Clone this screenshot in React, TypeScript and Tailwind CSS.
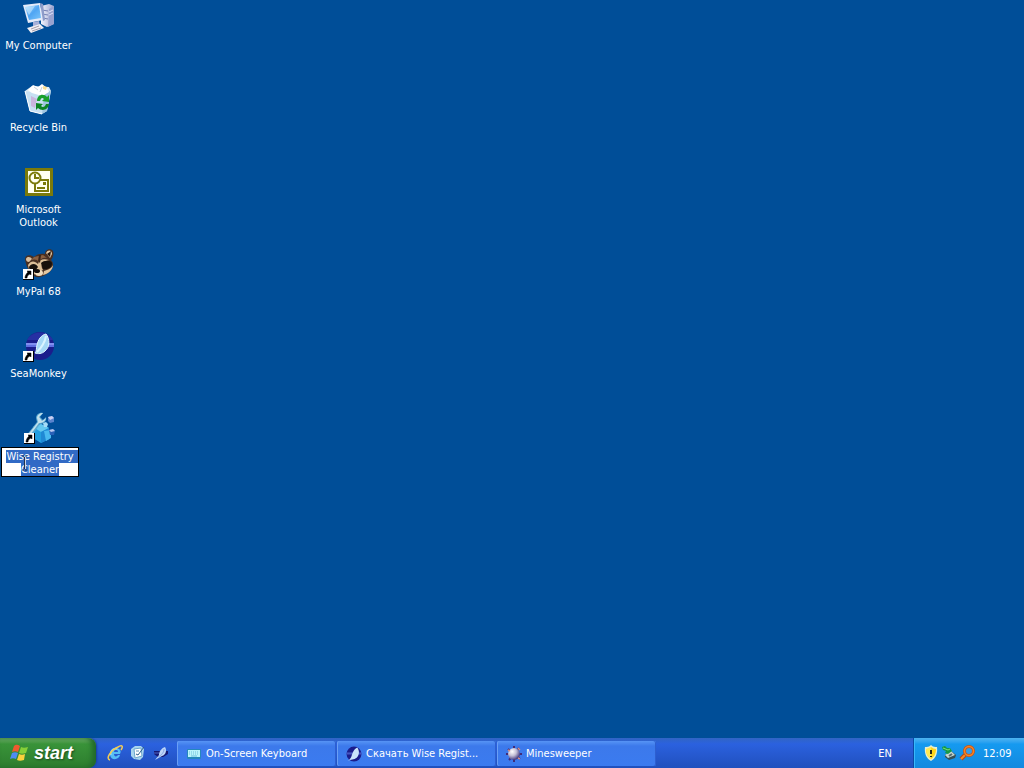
import { useEffect, useRef, useState } from "react";
import type { ReactNode } from "react";

function ComputerIcon() {
  return (
    <svg viewBox="0 0 32 32" className="size-8" aria-hidden="true">
      <defs>
        <linearGradient id="screen" x1="0" y1="0" x2="1" y2="1">
          <stop offset="0" stopColor="#a9dcff" />
          <stop offset="0.5" stopColor="#4fa5f3" />
          <stop offset="1" stopColor="#7cc6fb" />
        </linearGradient>
        <linearGradient id="tower" x1="0" y1="0" x2="1" y2="0">
          <stop offset="0" stopColor="#f3f4fc" />
          <stop offset="1" stopColor="#9aa3cf" />
        </linearGradient>
      </defs>
      <path d="M18 4 L26 2 L31 4 L31 22 L24 25 L18 22 Z" fill="url(#tower)" />
      <path d="M26 7 L31 4 L31 22 L25 25 Z" fill="#98a2cf" />
      <path d="M19 8 L25 9 M19 12 L25 13 M20 16 L25 17" stroke="#7480b4" strokeWidth="1" />
      <path d="M26 10 L30 8 M26 13 L30 11" stroke="#dfe4fa" strokeWidth="1" />
      <path d="M0 3 L17 1 L20 18 L5 21 Z" fill="#e4ebfa" />
      <path d="M17 1 L20 2 L22 18 L20 19 Z" fill="#8d9bc9" />
      <path d="M2 5 L16 3 L18 16 L6 18 Z" fill="url(#screen)" />
      <path d="M2 5 L12 4 L6 13 Z" fill="#c9eaff" opacity="0.6" />
      <path d="M10 20 L16 19 L17 24 L10 25 Z" fill="#a8b1d9" />
      <path d="M4 26 L17 22 L21 26 L8 31 Z" fill="#f2f0f4" />
      <path d="M8 27 L16 24 M9 29 L18 26" stroke="#a79eaa" strokeWidth="1" />
    </svg>
  );
}

function RecycleIcon() {
  return (
    <svg viewBox="0 0 32 32" className="size-8" aria-hidden="true">
      <path d="M2 7 L9 2 L26 3 L28 7 L24 27 L19 30 L7 27 Z" fill="#dcebf6" />
      <path d="M2 7 L21 11 L19 30 L7 27 Z" fill="#c7e0f3" />
      <path d="M21 11 L28 6 L24 27 L19 30 Z" fill="#9ec4df" />
      <path d="M5 6 L10 1 L15 3 L19 0 L24 4 L26 8 L19 12 L9 9 Z" fill="#fff" />
      <path d="M11 3 L15 6 M19 3 L17 8" stroke="#c9d1d8" strokeWidth="1" />
      <path d="M20 2 L24 3 L23 6 L20 5 Z" fill="#f8df94" />
      <path d="M8 12 L14 15 L12 24 L8 22 Z" fill="#c9b5de" />
      <path d="M2 7 L7 27 L19 30" fill="none" stroke="#fff" strokeWidth="1" />
      <path d="M14 17 C14 10 21 9 24 13 L26 11 L26 18 L19 17 L21 15 C19 13 18 14 17 17 Z" fill="#18a02c" />
      <path d="M26 20 C25 27 18 27 15 24 L13 26 L13 19 L20 20 L18 22 C20 24 22 23 23 20 Z" fill="#0c8423" />
    </svg>
  );
}

function OutlookIcon() {
  return (
    <svg viewBox="0 0 32 32" className="size-8" aria-hidden="true">
      <rect x="2" y="2" width="28" height="28" fill="#7b7a0a" />
      <rect x="5" y="5" width="22" height="22" fill="#fffff0" />
      <rect x="12" y="14" width="13" height="11" fill="#fffff0" stroke="#7b7a0a" strokeWidth="2" />
      <path d="M20 16 H23 V19 H20 Z" fill="#7b7a0a" />
      <path d="M14 22 H22" stroke="#7b7a0a" strokeWidth="2" />
      <circle cx="12" cy="12" r="5.500" fill="#fffff0" stroke="#7b7a0a" strokeWidth="2" />
      <path d="M12 8 V12 H16" fill="none" stroke="#7b7a0a" strokeWidth="2" />
    </svg>
  );
}

function ShortcutArrow() {
  return (
    <g>
      <rect x="0" y="21" width="11" height="11" fill="#000" />
      <rect x="0" y="21" width="10" height="10" fill="#fff" />
      <path d="M4 23 H8 V27 L7 26 C5 27 4 28 4 30 H2 C2 28 3 26 5 24 Z" fill="#000" stroke="#000" strokeWidth="0.500" />
    </g>
  );
}

function RaccoonIcon() {
  return (
    <svg viewBox="0 0 32 32" className="size-8" aria-hidden="true">
      <path d="M2 11 C2 7 7 6 11 9 C14 6 18 5 22 6 C22 1 28 0 30 3 C31 6 30 10 28 12 C32 16 30 22 25 25 C20 29 14 31 10 27 C5 23 3 17 2 11 Z" fill="#493023" />
      <path d="M3 11 C4 8 8 9 9 11 L6 14 C4 14 3 13 3 11 Z" fill="#d9bf9f" />
      <path d="M23 5 C25 1 29 2 29 6 L27 10 Z" fill="#e3caa8" />
      <path d="M24 6 L28 3 L27 9 Z" fill="#26170f" />
      <path d="M5 17 C8 12 12 13 15 16 C16 12 20 10 26 12 L20 14 C18 16 18 19 20 22 L10 27 C6 24 6 21 5 17 Z" fill="#dcbf98" />
      <path d="M11 9 L20 7 L24 10 C20 9 17 11 16 14 C14 11 11 11 8 12 Z" fill="#8b6040" />
      <path d="M16 7 L18 7 L17 15 L15 13 Z" fill="#3a2418" />
      <path d="M6 19 C8 15 13 15 15 19 L12 23 C9 24 6 22 6 19 Z" fill="#17100c" />
      <path d="M18 15 C21 12 28 12 29 15 C29 20 24 22 20 21 Z" fill="#17100c" />
      <path d="M21 23 C25 22 29 20 30 17 C30 22 25 26 20 27 Z" fill="#e3c8a1" />
      <ellipse cx="16" cy="25" rx="4" ry="3" fill="#f3dfc0" />
      <ellipse cx="14" cy="23" rx="3" ry="2" fill="#120d0b" />
      <ShortcutArrow />
    </svg>
  );
}

function SeaMonkeyArt() {
  return (
    <g>
      <circle cx="17" cy="16" r="14" fill="#1b1d8c" />
      <path d="M4 10 C9 0 25 0 30 10 Z" fill="#2630a3" />
      <path d="M3 13 H31 V17 H3 Z" fill="#5f6fe0" />
      <path d="M3 14 H31" stroke="#a3b0ff" strokeWidth="1" />
      <path d="M23 4 C27 9 27 17 22 21 C19 24 15 24 12 23 C14 21 13 18 14 15 C15 10 18 5 23 4 Z" fill="#a5d8f5" stroke="#e0f6ff" strokeWidth="1" />
      <path d="M23 6 C22 12 19 17 14 22" fill="none" stroke="#d9f4ff" strokeWidth="2" />
    </g>
  );
}

function SeaMonkeyIcon() {
  return (
    <svg viewBox="0 0 32 32" className="size-8" aria-hidden="true">
      <SeaMonkeyArt />
      <ShortcutArrow />
    </svg>
  );
}

function RegistryIcon() {
  return (
    <svg viewBox="0 0 32 32" className="size-8" aria-hidden="true">
      <path d="M9 15 L17 12 L25 16 L25 27 L17 31 L9 26 Z" fill="#239fe0" />
      <path d="M9 15 L17 12 L25 16 L17 20 Z" fill="#65c8f0" />
      <path d="M17 20 L25 16 L25 27 L17 31 Z" fill="#1f88d4" />
      <path d="M20 19 L27 18 L27 26 L22 29 Z" fill="#49b9f0" />
      <path d="M2 24 L13 10 L12 6 C12 3 15 0 19 1 L16 5 L19 8 L22 5 C23 9 20 12 16 12 L5 28 Z" fill="#5ba8d0" />
      <path d="M3 24 L14 10 L13 6 C13 3 16 1 19 1 L15 5 L18 9 L22 6 C21 10 18 11 15 11 L4 26 Z" fill="#c2e0ec" />
      <path d="M24 5 L28 4 L30 6 L30 10 L26 11 L24 9 Z" fill="#5a83cd" />
      <path d="M24 5 L28 4 L30 6 L26 8 Z" fill="#c9d0f1" />
      <path d="M19 11 L22 10 L24 12 L23 15 L20 15 Z" fill="#a5dcf7" />
      <path d="M25 18 L29 17 L31 19 L30 23 L26 23 Z" fill="#2960b7" />
      <path d="M25 18 L29 17 L31 19 L27 20 Z" fill="#b6c6ee" />
      <ShortcutArrow />
    </svg>
  );
}

function WindowsLogo() {
  return (
    <svg viewBox="0 0 20 18" className="h-[18px] w-5" aria-hidden="true">
      <path d="M4 2 C6 0 8 1 10 2 L8 8 C6 7 4 7 2 8 Z" fill="#ef5a2f" />
      <path d="M11 3 C13 4 15 4 18 3 L16 9 C13 10 11 10 9 9 Z" fill="#86cf38" />
      <path d="M2 9 C4 8 6 8 8 9 L6 15 C4 14 2 14 0 15 Z" fill="#4e8cf2" />
      <path d="M9 10 C11 11 13 11 15 10 L14 16 C11 17 9 17 7 16 Z" fill="#fad13c" />
    </svg>
  );
}

function ExplorerIcon() {
  return (
    <svg viewBox="0 0 16 16" className="size-4" aria-hidden="true">
      <path d="M13 10 C12 15 4 16 3 10 C2 4 8 1 12 4 C14 5 14 7 13 9 H7 C7 12 10 12 11 10 Z M7 7 H11 C11 4 7 4 7 7 Z" fill="#55bdf5" fillRule="evenodd" />
      <path d="M4 10 C3 6 6 3 10 4" fill="none" stroke="#b2e8ff" strokeWidth="1" />
      <path d="M3 15 C-2 14 4 5 11 2 C16 -1 16 2 14 5" fill="none" stroke="#f1cb58" strokeWidth="1.500" />
    </svg>
  );
}

function ShowDesktopIcon() {
  return (
    <svg viewBox="0 0 16 16" className="size-4" aria-hidden="true">
      <path d="M1 4 L5 1 L11 1 L14 4 L13 12 L10 15 L4 14 L1 11 Z" fill="#a9d5ee" />
      <path d="M4 4 L11 3 L12 11 L5 13 Z" fill="#fff" stroke="#6ba5cc" strokeWidth="1" />
      <path d="M6 9 L8 10 L14 2" fill="none" stroke="#2d5f8c" strokeWidth="1" />
      <path d="M6 6 H9" stroke="#5c95b8" strokeWidth="1" />
    </svg>
  );
}

function WingIcon() {
  return (
    <svg viewBox="0 0 16 16" className="size-4" aria-hidden="true">
      <path d="M1 6 H15 V9 L10 12 H5 L1 9 Z" fill="#151873" />
      <path d="M12 2 C14 5 13 10 9 11 L2 15 L6 10 C6 6 9 3 12 2 Z" fill="#bcd5f8" />
      <path d="M1 8 H6" stroke="#5166c6" strokeWidth="1" />
      <path d="M11 4 C11 7 9 10 5 12" fill="none" stroke="#86a3e0" strokeWidth="1" />
    </svg>
  );
}

function KeyboardIcon() {
  return (
    <svg viewBox="0 0 16 16" className="size-4" aria-hidden="true">
      <rect x="1" y="3" width="14" height="10" rx="1" fill="#2588bd" />
      <rect x="2" y="4" width="12" height="7" fill="#baf4fb" />
      <path d="M3 6 H13 M3 8 H13" stroke="#6cbfdb" strokeWidth="1" strokeDasharray="1 1" />
      <path d="M5 10 H11" stroke="#6cbfdb" strokeWidth="1" />
    </svg>
  );
}

function TaskSeaMonkeyIcon() {
  return (
    <svg viewBox="2 1 30 30" className="size-4" aria-hidden="true">
      <circle cx="17" cy="16" r="14" fill="#1b1d8c" />
      <path d="M3 13 H31 V17 H3 Z" fill="#4656c0" />
      <path d="M23 4 C28 10 27 19 22 23 C17 27 11 26 5 29 C12 25 12 20 14 15 C16 10 19 6 23 4 Z" fill="#c9e4fb" />
    </svg>
  );
}

function MineIcon() {
  return (
    <svg viewBox="0 0 16 16" className="size-4" aria-hidden="true">
      <defs>
        <radialGradient id="mine" cx="0.35" cy="0.3" r="0.7">
          <stop offset="0" stopColor="#fff" />
          <stop offset="0.5" stopColor="#c3bfd6" />
          <stop offset="1" stopColor="#453c82" />
        </radialGradient>
      </defs>
      <path d="M8 0 V16 M0 8 H16 M2 3 L14 13 M13 2 L3 14" stroke="#402b78" strokeWidth="2" />
      <circle cx="8" cy="8" r="6" fill="url(#mine)" />
      <path d="M12 2 L14 4 M2 4 L4 5 M12 12 L14 13" stroke="#d18e86" strokeWidth="1.500" />
    </svg>
  );
}

function ShieldIcon() {
  return (
    <svg viewBox="0 0 16 16" className="size-4" aria-hidden="true">
      <path d="M8 0 C10 2 12 2 14 2 C15 9 12 14 8 16 C4 14 1 9 2 2 C4 2 6 2 8 0 Z" fill="#e9eecb" />
      <path d="M8 2 C10 3 11 4 13 4 C13 9 11 12 8 14 C5 12 3 9 3 4 C5 4 6 3 8 2 Z" fill="#ffd51c" />
      <path d="M8 2 V14 C5 12 3 9 3 4 C5 4 6 3 8 2 Z" fill="#ffe952" />
      <path d="M8 5 V9 M8 11 V12" stroke="#282719" strokeWidth="2" />
    </svg>
  );
}

function HardwareIcon() {
  return (
    <svg viewBox="0 0 16 16" className="size-4" aria-hidden="true">
      <path d="M4 10 L10 6 L15 10 L14 13 L8 15 L4 12 Z" fill="#344f55" />
      <path d="M4 10 L10 6 L14 10 L7 13 Z" fill="#c3d5cf" />
      <path d="M8 11 L11 9" stroke="#566c70" strokeWidth="2" />
      <path d="M1 2 L4 1 L6 3 L9 3 L11 6 L7 9 L4 8 L5 6 L2 5 Z" fill="#159947" />
      <path d="M2 3 L7 5 L9 4" fill="none" stroke="#78df78" strokeWidth="1" />
    </svg>
  );
}

function SearchIcon() {
  return (
    <svg viewBox="0 0 16 16" className="size-4" aria-hidden="true">
      <path d="M6 10 L2 14" stroke="#b94712" strokeWidth="4" />
      <path d="M6 10 L2 14" stroke="#f68b28" strokeWidth="2" />
      <circle cx="10" cy="6" r="4.500" fill="#3a9ce5" stroke="#c95314" strokeWidth="3" />
      <circle cx="10" cy="6" r="4.500" fill="none" stroke="#f68424" strokeWidth="1.500" />
    </svg>
  );
}

function Pointer() {
  return (
    <svg viewBox="0 0 7 16" className="pointer-events-none absolute top-2 left-5 h-4 w-[7px]" aria-hidden="true">
      <path d="M1 1 H3 M4 1 H6 M3.500 2 V14 M1 15 H3 M4 15 H6" stroke="#25334f" strokeWidth="1" />
      <path d="M4.500 2 V14" stroke="#cbd7e9" strokeWidth="1" />
    </svg>
  );
}

function RenameBox() {
  const [name, setName] = useState("Wise Registry Cleaner");
  const box = useRef<HTMLTextAreaElement>(null);

  useEffect(() => {
    box.current?.focus();
    box.current?.select();
  }, []);

  return (
    <div className="relative -mt-0.5 self-stretch">
      <textarea
        ref={box}
        aria-label="Shortcut name"
        rows={2}
        spellCheck={false}
        value={name}
        onChange={(event) => setName(event.target.value)}
        className="block w-full resize-none overflow-hidden border border-black bg-white px-0.5 pt-0.5 text-center text-[11px] leading-[13px] text-black outline-none selection:bg-[#316ac5] selection:text-white"
      />
      <Pointer />
    </div>
  );
}

const shortcuts: { label: string; icon: ReactNode }[] = [
  { label: "My Computer", icon: <ComputerIcon /> },
  { label: "Recycle Bin", icon: <RecycleIcon /> },
  { label: "Microsoft Outlook", icon: <OutlookIcon /> },
  { label: "MyPal 68", icon: <RaccoonIcon /> },
  { label: "SeaMonkey", icon: <SeaMonkeyIcon /> },
];

const quickLaunch: { label: string; icon: ReactNode }[] = [
  { label: "Internet Explorer", icon: <ExplorerIcon /> },
  { label: "Show Desktop", icon: <ShowDesktopIcon /> },
  { label: "SeaMonkey", icon: <WingIcon /> },
];

const tasks: { label: string; icon: ReactNode }[] = [
  { label: "On-Screen Keyboard", icon: <KeyboardIcon /> },
  { label: "Скачать Wise Regist...", icon: <TaskSeaMonkeyIcon /> },
  { label: "Minesweeper", icon: <MineIcon /> },
];

export default function App() {
  return (
    <div className="flex min-h-screen flex-col bg-[#004e98] font-[Tahoma,'DejaVu_Sans_Condensed','Noto_Sans',sans-serif] text-[11px] leading-[13px] text-white">
      <main className="flex-1">
        <ul className="w-20">
          {shortcuts.map((item) => (
            <li key={item.label} className="h-[82px]">
              <button type="button" className="flex w-full flex-col items-center gap-[5px] pt-0.5 pr-[3px]">
                {item.icon}
                <span>{item.label}</span>
              </button>
            </li>
          ))}
          <li className="flex flex-col items-center gap-[5px] pt-0.5 pr-px pl-px">
            <RegistryIcon />
            <RenameBox />
          </li>
        </ul>
      </main>

      <footer className="flex h-[30px] items-stretch bg-linear-to-b from-[#3165c4] via-[#2b61df] via-20% to-[#2050bd]">
        <button
          type="button"
          className="flex w-24 items-center gap-1 rounded-r-lg bg-linear-to-b from-[#71b26d] via-[#399339] via-20% to-[#2d7d2e] pl-2.5 shadow-[inset_-4px_0_5px_#22692b,1px_0_2px_#173f9c]"
        >
          <WindowsLogo />
          <span className="font-['Liberation_Sans',Arial,sans-serif] text-lg leading-5 font-bold italic [text-shadow:1px_1px_2px_#1b4a1d]">
            start
          </span>
        </button>

        <nav aria-label="Quick launch" className="flex w-[81px] items-center gap-[7px] pl-[11px]">
          {quickLaunch.map((item) => (
            <button key={item.label} type="button" aria-label={item.label}>
              {item.icon}
            </button>
          ))}
        </nav>

        <nav aria-label="Open windows" className="flex flex-1 items-stretch gap-px pt-[3px] pb-0.5">
          {tasks.map((task) => (
            <button
              key={task.label}
              type="button"
              className="flex w-[159px] items-center gap-1 rounded-xs bg-linear-to-b from-[#5794f5] via-[#3c79eb] via-20% to-[#3b7bf0] pl-[9px] shadow-[inset_1px_0_0_#6a9ff5,inset_-1px_0_0_#2d5fd0]"
            >
              {task.icon}
              <span className="whitespace-nowrap">{task.label}</span>
            </button>
          ))}
        </nav>

        <button type="button" aria-label="Input language: English" className="w-14">
          EN
        </button>

        <section
          aria-label="Notification area"
          className="flex w-[111px] items-center gap-0.5 border-l border-[#0b4aa5] bg-linear-to-b from-[#4db3f0] via-[#159af0] via-20% to-[#1389df] pl-[9px] shadow-[inset_1px_0_0_#38b8fb]"
        >
          <ShieldIcon />
          <HardwareIcon />
          <SearchIcon />
          <time className="ml-1.5">12:09</time>
        </section>
      </footer>
    </div>
  );
}
